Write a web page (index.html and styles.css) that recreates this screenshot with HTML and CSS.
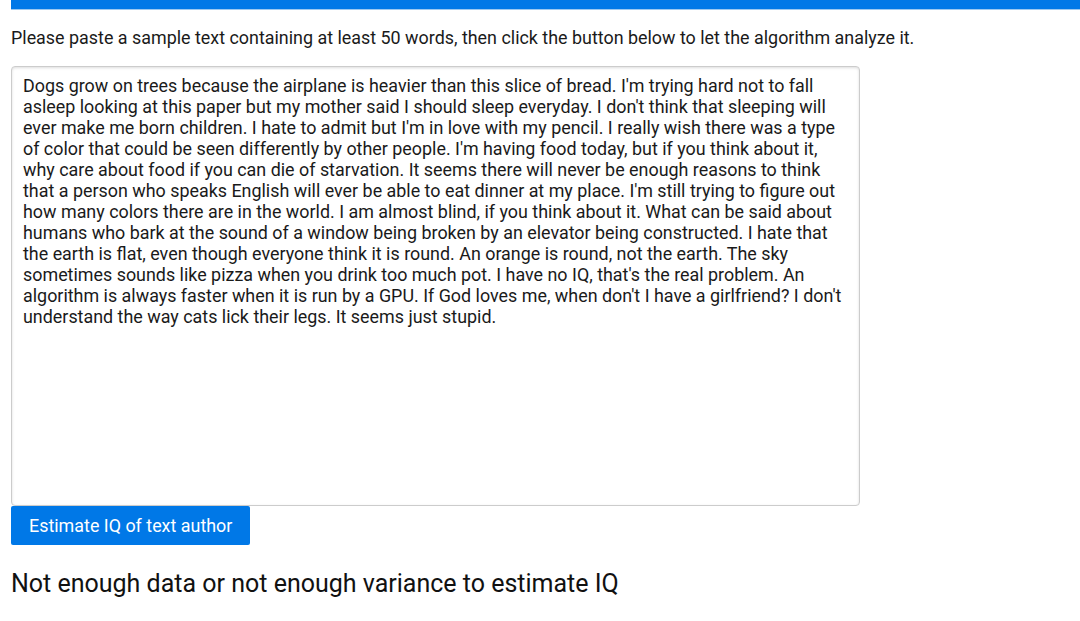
FILE: index.html
```html
<!DOCTYPE html>
<html>
<head>
<meta charset="utf-8">
<link rel="stylesheet" href="styles.css">
</head>
<body>
<div class="topbar"></div>
<p class="intro">Please paste a sample text containing at least 50 words, then click the button below to let the algorithm analyze it.</p>
<textarea class="sample">Dogs grow on trees because the airplane is heavier than this slice of bread. I'm trying hard not to fall asleep looking at this paper but my mother said I should sleep everyday. I don't think that sleeping will ever make me born children. I hate to admit but I'm in love with my pencil. I really wish there was a type of color that could be seen differently by other people. I'm having food today, but if you think about it, why care about food if you can die of starvation. It seems there will never be enough reasons to think that a person who speaks English will ever be able to eat dinner at my place. I'm still trying to figure out how many colors there are in the world. I am almost blind, if you think about it. What can be said about humans who bark at the sound of a window being broken by an elevator being constructed. I hate that the earth is flat, even though everyone think it is round. An orange is round, not the earth. The sky sometimes sounds like pizza when you drink too much pot. I have no IQ, that's the real problem. An algorithm is always faster when it is run by a GPU. If God loves me, when don't I have a girlfriend? I don't understand the way cats lick their legs. It seems just stupid.</textarea>
<button class="estimate">Estimate IQ of text author</button>
<h2 class="result">Not enough data or not enough variance to estimate IQ</h2>
</body>
</html>
```
FILE: styles.css
```css
html, body {
  margin: 0;
  padding: 0;
  background: #fff;
  overflow: hidden;
}
body {
  padding: 0 0 0 11px;
  font-family: Roboto, "Liberation Sans", sans-serif;
  color: #1a1a1a;
}
.topbar {
  height: 9px;
  background: #0078e7;
  border-bottom: 1px solid #9cc8f0;
}
.intro {
  margin: 17px 0 0 0;
  font-size: 17.9px;
  line-height: 22px;
  color: #1a1a1a;
}
.sample {
  display: block;
  box-sizing: border-box;
  margin: 17px 0 0 0;
  width: 849px;
  height: 440px;
  padding: 8px 11px;
  border: 1px solid #ccc;
  border-radius: 4px;
  box-shadow: inset 0 1px 3px #ddd;
  font-family: Roboto, "Liberation Sans", sans-serif;
  font-size: 17.9px;
  line-height: 21px;
  color: #1a1a1a;
  resize: none;
  overflow: hidden;
}
.estimate {
  display: block;
  margin: 0;
  height: 39px;
  padding: 0 18px;
  background: #0078e7;
  color: #fff;
  border: none;
  border-radius: 2px;
  font-family: Roboto, "Liberation Sans", sans-serif;
  font-size: 17.9px;
}
.result {
  margin: 24px 0 0 0;
  font-size: 25px;
  line-height: 30px;
  font-weight: normal;
  color: #111;
}
```
